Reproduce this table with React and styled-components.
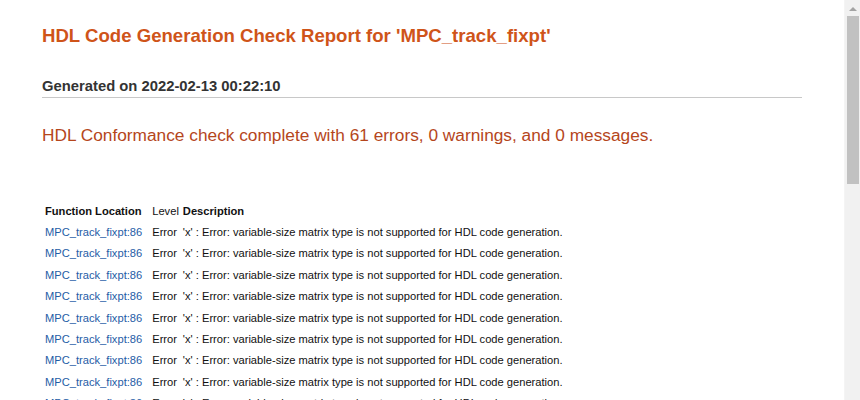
import React from "react";
import styled, { createGlobalStyle } from "styled-components";

const GlobalStyle = createGlobalStyle`
  html, body {
    margin: 0;
    padding: 0;
    background: #fff;
    overflow: hidden;
  }
  body {
    font-family: "Liberation Sans", Arial, sans-serif;
  }
`;

const Window = styled.div`
  display: flex;
  height: 400px;
`;

const Main = styled.div`
  flex: 1;
  overflow: hidden;
`;

const ScrollTrack = styled.div`
  width: 15px;
  flex: none;
  background: #f1f1f1;
  border-left: 1px solid #f4f4f4;
  display: flex;
  flex-direction: column;
  align-items: center;
`;

const ScrollButton = styled.div`
  height: 16px;
  width: 100%;
  display: flex;
  align-items: center;
  justify-content: center;
`;

const ScrollThumb = styled.div`
  width: 12px;
  height: 168px;
  background: #c1c1c1;
`;

const Page = styled.div`
  padding: 24px 0 40px 42px;
  width: 760px;
`;

const Title = styled.h1`
  margin: 0;
  font-size: 18.6px;
  line-height: 24px;
  font-weight: bold;
  color: #cf5419;
`;

const Generated = styled.h2`
  margin: 28px 0 0;
  font-size: 14.8px;
  line-height: 20px;
  font-weight: bold;
  color: #333;
  padding-bottom: 1px;
  border-bottom: 1px solid #c8c8c8;
`;

const Summary = styled.p`
  margin: 26px 0 0;
  font-size: 17.3px;
  line-height: 22px;
  color: #b5461c;
`;

const Table = styled.table`
  margin: 54px 0 0 0;
  border-collapse: collapse;
  font-size: 11.15px;
  color: #111;
`;

const Head = styled.th`
  text-align: left;
  font-weight: ${(p) => (p.$plain ? "normal" : "bold")};
  padding: 0 ${(p) => p.$gap ?? 2}px 0 3px;
  height: 21.4px;
  white-space: nowrap;
`;

const Cell = styled.td`
  padding: 0 ${(p) => p.$gap ?? 2}px 0 3px;
  height: 21.4px;
  white-space: nowrap;
`;

const Link = styled.a`
  color: #1f5da6;
  text-decoration: none;
`;

const rows = Array.from({ length: 9 }, (_, i) => i);

export default function App() {
  return (
    <>
      <GlobalStyle />
      <Window>
        <Main>
          <Page>
            <Title>HDL Code Generation Check Report for 'MPC_track_fixpt'</Title>
            <Generated>Generated on 2022-02-13 00:22:10</Generated>
            <Summary>
              HDL Conformance check complete with 61 errors, 0 warnings, and 0
              messages.
            </Summary>
            <Table>
              <thead>
                <tr>
                  <Head $gap={7}>Function Location</Head>
                  <Head $plain $gap={1}>Level</Head>
                  <Head>Description</Head>
                </tr>
              </thead>
              <tbody>
                {rows.map((i) => (
                  <tr key={i}>
                    <Cell $gap={7}>
                      <Link href="#">MPC_track_fixpt:86</Link>
                    </Cell>
                    <Cell $gap={1}>Error</Cell>
                    <Cell>
                      'x' : Error: variable-size matrix type is not supported
                      for HDL code generation.
                    </Cell>
                  </tr>
                ))}
              </tbody>
            </Table>
          </Page>
        </Main>
        <ScrollTrack>
          <ScrollButton>
            <svg width="8" height="5" viewBox="0 0 8 5">
              <path d="M0 5 L4 1 L8 5 Z" fill="#a3a3a3" />
            </svg>
          </ScrollButton>
          <ScrollThumb />
        </ScrollTrack>
      </Window>
    </>
  );
}
